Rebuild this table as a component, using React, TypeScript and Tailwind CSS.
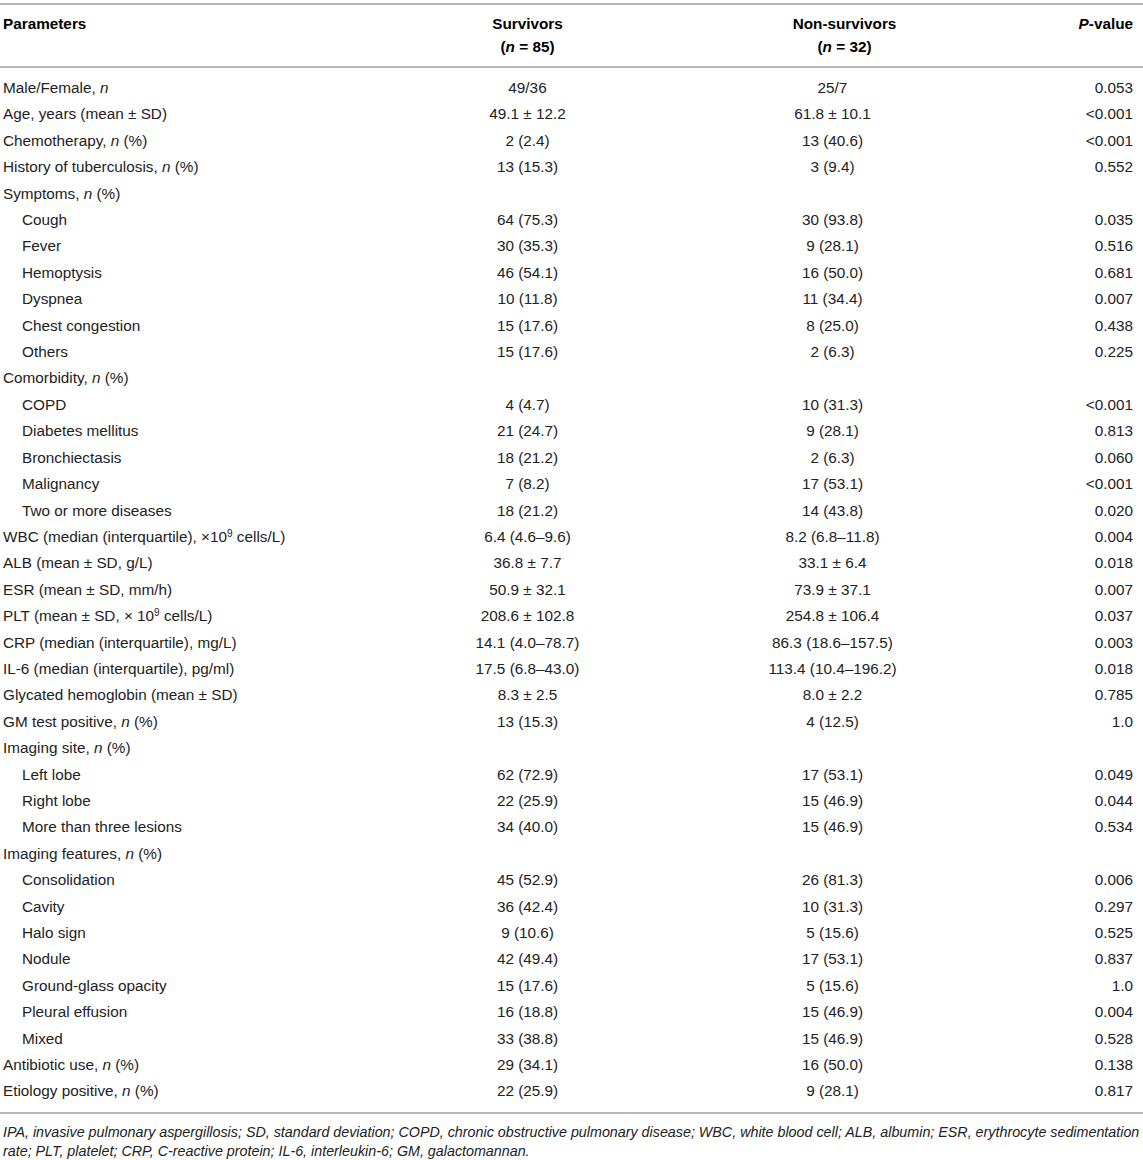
import type { ReactNode } from "react";

type Row = {
  label: ReactNode;
  sub?: boolean;
  a?: string;
  b?: string;
  p?: string;
};

const N = () => <i>n</i>;

const rows: Row[] = [
  { label: <>Male/Female, <N /></>, a: "49/36", b: "25/7", p: "0.053" },
  { label: "Age, years (mean ± SD)", a: "49.1 ± 12.2", b: "61.8 ± 10.1", p: "<0.001" },
  { label: <>Chemotherapy, <N /> (%)</>, a: "2 (2.4)", b: "13 (40.6)", p: "<0.001" },
  { label: <>History of tuberculosis, <N /> (%)</>, a: "13 (15.3)", b: "3 (9.4)", p: "0.552" },
  { label: <>Symptoms, <N /> (%)</> },
  { label: "Cough", sub: true, a: "64 (75.3)", b: "30 (93.8)", p: "0.035" },
  { label: "Fever", sub: true, a: "30 (35.3)", b: "9 (28.1)", p: "0.516" },
  { label: "Hemoptysis", sub: true, a: "46 (54.1)", b: "16 (50.0)", p: "0.681" },
  { label: "Dyspnea", sub: true, a: "10 (11.8)", b: "11 (34.4)", p: "0.007" },
  { label: "Chest congestion", sub: true, a: "15 (17.6)", b: "8 (25.0)", p: "0.438" },
  { label: "Others", sub: true, a: "15 (17.6)", b: "2 (6.3)", p: "0.225" },
  { label: <>Comorbidity, <N /> (%)</> },
  { label: "COPD", sub: true, a: "4 (4.7)", b: "10 (31.3)", p: "<0.001" },
  { label: "Diabetes mellitus", sub: true, a: "21 (24.7)", b: "9 (28.1)", p: "0.813" },
  { label: "Bronchiectasis", sub: true, a: "18 (21.2)", b: "2 (6.3)", p: "0.060" },
  { label: "Malignancy", sub: true, a: "7 (8.2)", b: "17 (53.1)", p: "<0.001" },
  { label: "Two or more diseases", sub: true, a: "18 (21.2)", b: "14 (43.8)", p: "0.020" },
  {
    label: <>WBC (median (interquartile), ×10<sup className="text-[10px]">9</sup> cells/L)</>,
    a: "6.4 (4.6–9.6)",
    b: "8.2 (6.8–11.8)",
    p: "0.004",
  },
  { label: "ALB (mean ± SD, g/L)", a: "36.8 ± 7.7", b: "33.1 ± 6.4", p: "0.018" },
  { label: "ESR (mean ± SD, mm/h)", a: "50.9 ± 32.1", b: "73.9 ± 37.1", p: "0.007" },
  {
    label: <>PLT (mean ± SD, × 10<sup className="text-[10px]">9</sup> cells/L)</>,
    a: "208.6 ± 102.8",
    b: "254.8 ± 106.4",
    p: "0.037",
  },
  { label: "CRP (median (interquartile), mg/L)", a: "14.1 (4.0–78.7)", b: "86.3 (18.6–157.5)", p: "0.003" },
  { label: "IL-6 (median (interquartile), pg/ml)", a: "17.5 (6.8–43.0)", b: "113.4 (10.4–196.2)", p: "0.018" },
  { label: "Glycated hemoglobin (mean ± SD)", a: "8.3 ± 2.5", b: "8.0 ± 2.2", p: "0.785" },
  { label: <>GM test positive, <N /> (%)</>, a: "13 (15.3)", b: "4 (12.5)", p: "1.0" },
  { label: <>Imaging site, <N /> (%)</> },
  { label: "Left lobe", sub: true, a: "62 (72.9)", b: "17 (53.1)", p: "0.049" },
  { label: "Right lobe", sub: true, a: "22 (25.9)", b: "15 (46.9)", p: "0.044" },
  { label: "More than three lesions", sub: true, a: "34 (40.0)", b: "15 (46.9)", p: "0.534" },
  { label: <>Imaging features, <N /> (%)</> },
  { label: "Consolidation", sub: true, a: "45 (52.9)", b: "26 (81.3)", p: "0.006" },
  { label: "Cavity", sub: true, a: "36 (42.4)", b: "10 (31.3)", p: "0.297" },
  { label: "Halo sign", sub: true, a: "9 (10.6)", b: "5 (15.6)", p: "0.525" },
  { label: "Nodule", sub: true, a: "42 (49.4)", b: "17 (53.1)", p: "0.837" },
  { label: "Ground-glass opacity", sub: true, a: "15 (17.6)", b: "5 (15.6)", p: "1.0" },
  { label: "Pleural effusion", sub: true, a: "16 (18.8)", b: "15 (46.9)", p: "0.004" },
  { label: "Mixed", sub: true, a: "33 (38.8)", b: "15 (46.9)", p: "0.528" },
  { label: <>Antibiotic use, <N /> (%)</>, a: "29 (34.1)", b: "16 (50.0)", p: "0.138" },
  { label: <>Etiology positive, <N /> (%)</>, a: "22 (25.9)", b: "9 (28.1)", p: "0.817" },
];

const App = () => {
  return (
    <div className="w-[1143px] bg-white pt-[3px] text-[#222] font-['Liberation_Sans',Arial,sans-serif]">
      <table className="w-full table-fixed border-collapse text-[15.3px]">
        <colgroup>
          <col className="w-[390px]" />
          <col className="w-[275px]" />
          <col className="w-[335px]" />
          <col />
        </colgroup>
        <thead>
          <tr className="border-y-2 border-[#b8b8b8] align-top font-bold leading-[23px] text-black [&>th]:pt-[7px] [&>th]:pb-[8px]">
            <th className="pl-[3px] text-left">Parameters</th>
            <th className="text-center">
              Survivors
              <br />(<i>n</i> = 85)
            </th>
            <th className="pl-[24px] text-center">
              Non-survivors
              <br />(<i>n</i> = 32)
            </th>
            <th className="pr-[10px] text-right">
              <i>P</i>-value
            </th>
          </tr>
        </thead>
        <tbody className="border-b-2 border-[#b8b8b8]">
          {rows.map((r, i) => (
            <tr
              key={i}
              className={`leading-[26.4px] ${i === 0 ? "[&>td]:pt-[7px]" : ""} ${
                i === rows.length - 1 ? "[&>td]:pb-[7px]" : ""
              }`}
            >
              <td className={r.sub ? "pl-[22px]" : "pl-[3px]"}>{r.label}</td>
              <td className="text-center">{r.a}</td>
              <td className="text-center">{r.b}</td>
              <td className="pr-[10px] text-right">{r.p}</td>
            </tr>
          ))}
        </tbody>
      </table>
      <p className="pl-[3px] pt-[9px] pb-[4px] text-[14.3px] italic leading-[19px]">
        IPA, invasive pulmonary aspergillosis; SD, standard deviation; COPD, chronic obstructive pulmonary
        disease; WBC, white blood cell; ALB, albumin; ESR, erythrocyte sedimentation
        <br />
        rate; PLT, platelet; CRP, C-reactive protein; IL-6, interleukin-6; GM, galactomannan.
      </p>
    </div>
  );
};

export default App;
